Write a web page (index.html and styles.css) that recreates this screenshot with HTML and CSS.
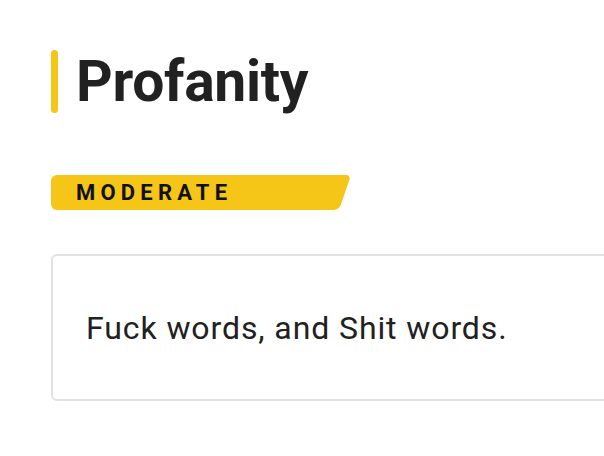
FILE: index.html
```html
<!DOCTYPE html>
<html>
<head>
<meta charset="utf-8">
<link rel="stylesheet" href="styles.css">
</head>
<body>
<main class="page">
  <h1 class="title"><span class="title-bar"></span>Profanity</h1>
  <div class="badge"><span class="badge-text">MODERATE</span></div>
  <section class="card">
    <p class="card-text">Fuck words, and Shit words.</p>
  </section>
</main>
</body>
</html>
```
FILE: styles.css
```css
html, body {
  margin: 0;
  padding: 0;
  background: #ffffff;
  overflow: hidden;
}
body {
  font-family: Roboto, "Liberation Sans", sans-serif;
  color: #212121;
}
.page {
  padding: 50px 0 0 51px;
  display: flex;
  flex-direction: column;
  align-items: flex-start;
  overflow: hidden;
}
.title {
  margin: 0;
  display: flex;
  align-items: center;
  gap: 18px;
  font-size: 57px;
  font-weight: 700;
  line-height: 63px;
  color: #212121;
  letter-spacing: -0.3px;
}
.title-bar {
  width: 7px;
  height: 63px;
  border-radius: 4px;
  background: #f5c518;
}
.badge {
  position: relative;
  margin-top: 62px;
  width: 282px;
  height: 35px;
  background: #f5c518;
  border-radius: 6px 0 0 6px;
  display: flex;
  align-items: center;
}
.badge::after {
  content: "";
  position: absolute;
  right: -6px;
  top: 0;
  width: 24px;
  height: 35px;
  background: #f5c518;
  border-radius: 5px;
  transform: skewX(-19deg);
  transform-origin: bottom left;
}
.badge-text {
  margin-left: 25px;
  font-size: 22px;
  font-weight: 700;
  letter-spacing: 5.2px;
  color: #111111;
}
.card {
  margin-top: 44px;
  width: 600px;
  height: 147px;
  border: 2px solid #e2e2e2;
  border-radius: 6px;
  display: flex;
  align-items: center;
  box-sizing: border-box;
}
.card-text {
  margin: 0 0 0 33px;
  font-size: 32px;
  letter-spacing: 0.9px;
  color: #212121;
}
```
